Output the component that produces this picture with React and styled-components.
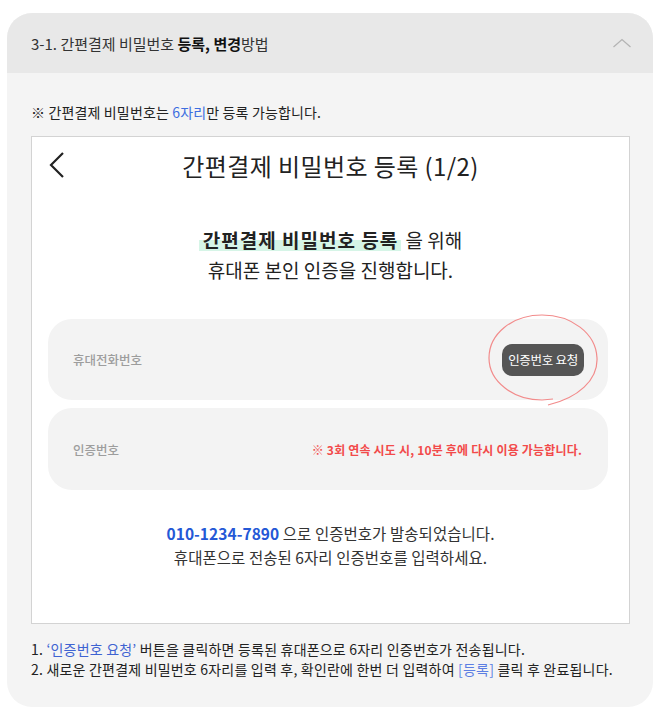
import React from "react";
import styled, { createGlobalStyle } from "styled-components";

const Global = createGlobalStyle`
  html, body { margin: 0; padding: 0; background: #ffffff; }
  body { font-family: "Noto Sans CJK KR", "Noto Sans", sans-serif; color: #222; }
  * { box-sizing: border-box; }
`;

const Card = styled.section`
  margin: 13px 5px 0 7px;
  width: 646px;
  border-radius: 25px;
  overflow: hidden;
  background: #f4f4f4;
`;

const Header = styled.header`
  height: 60px;
  background: #e8e8e8;
  display: flex;
  align-items: center;
  justify-content: space-between;
  padding: 0 21px 0 24px;
`;

const HeaderTitle = styled.h3`
  margin: 0;
  font-size: 15px;
  font-weight: 400;
  color: #333;
  letter-spacing: 0;
  b { font-weight: 700; color: #111; }
`;

const Body = styled.div`
  padding: 29px 23px 28px 24px;
`;

const Note = styled.p`
  margin: 0 0 14px;
  font-size: 14px;
  line-height: 20px;
  color: #222;
  letter-spacing: 0.15px;
`;

const Blue = styled.span`
  color: ${(p) => p.$c || "#3d6ee0"};
  font-weight: ${(p) => (p.$bold ? 700 : "inherit")};
`;

const Shot = styled.div`
  height: 488px;
  border: 1px solid #d3d3d3;
  background: #fff;
  display: flex;
  flex-direction: column;
  position: relative;
`;

const TopBar = styled.div`
  height: 56px;
  display: grid;
  grid-template-columns: 1fr auto 1fr;
  align-items: center;
  padding: 0 16px;
`;

const Back = styled.svg`
  justify-self: start;
  width: 18px;
  height: 28px;
`;

const ShotTitle = styled.h2`
  margin: 0;
  font-size: 24px;
  font-weight: 400;
  color: #222;
  letter-spacing: 0.4px;
`;

const Lead = styled.p`
  margin: 32px 0 0;
  text-align: center;
  font-size: 19px;
  line-height: 30px;
  color: #222;
  letter-spacing: 0;
`;

const Mark = styled.strong`
  font-weight: 700;
  letter-spacing: 1px;
  padding: 0 3px 0 4px;
  background: linear-gradient(
    transparent 52%,
    #d6f5e7 52%,
    #d6f5e7 92%,
    transparent 92%
  );
`;

const Field = styled.div`
  margin: ${(p) => p.$m};
  height: ${(p) => p.$h}px;
  border-radius: 24px;
  background: #f3f3f3;
  display: flex;
  align-items: center;
  justify-content: space-between;
  padding: 0 ${(p) => p.$pr}px 0 25px;
`;

const Label = styled.span`
  font-size: 12.5px;
  font-weight: 500;
  color: #9d9d9d;
  letter-spacing: 0;
`;

const ReqButton = styled.button`
  width: 82px;
  height: 32px;
  border: 0;
  border-radius: 10px;
  background: #555;
  color: #fff;
  font-family: inherit;
  font-size: 12.5px;
  letter-spacing: -0.3px;
  padding: 0;
`;

const Warn = styled.span`
  font-size: 12px;
  font-weight: 700;
  color: #f24a4a;
  letter-spacing: 0.18px;
`;

const Ring = styled.svg`
  position: absolute;
  left: 448px;
  top: 173px;
  width: 125px;
  height: 100px;
  pointer-events: none;
`;

const Sent = styled.p`
  margin: 31px 0 0;
  text-align: center;
  font-size: 15.5px;
  line-height: 24px;
  color: #333;
  letter-spacing: 0.05px;
`;

const Steps = styled.ol`
  margin: 15px 0 0;
  padding: 0;
  list-style: none;
  font-size: 14px;
  line-height: 20px;
  color: #222;
  letter-spacing: 0.2px;
`;

export default function App() {
  return (
    <>
      <Global />
      <Card>
        <Header>
          <HeaderTitle>
            3-1. 간편결제 비밀번호 <b>등록, 변경</b>방법
          </HeaderTitle>
          <svg width="20" height="12" viewBox="0 0 20 12" fill="none">
            <path d="M1.5 10 L10 2.5 L18.5 10" stroke="#b4b4b4" strokeWidth="1.3" />
          </svg>
        </Header>
        <Body>
          <Note>
            ※ 간편결제 비밀번호는 <Blue>6자리</Blue>만 등록 가능합니다.
          </Note>
          <Shot>
            <TopBar>
              <Back viewBox="0 0 18 28" fill="none">
                <path d="M15 2 L3 14 L15 26" stroke="#222" strokeWidth="2.2" />
              </Back>
              <ShotTitle>간편결제 비밀번호 등록 (1/2)</ShotTitle>
              <span />
            </TopBar>
            <Lead>
              <Mark>간편결제 비밀번호 등록</Mark> 을 위해
              <br />
              휴대폰 본인 인증을 진행합니다.
            </Lead>
            <Field $m="34px 21px 0 16px" $h={81} $pr={24}>
              <Label>휴대전화번호</Label>
              <ReqButton>인증번호 요청</ReqButton>
            </Field>
            <Field $m="8px 21px 0 16px" $h={82} $pr={26}>
              <Label>인증번호</Label>
              <Warn>※ 3회 연속 시도 시, 10분 후에 다시 이용 가능합니다.</Warn>
            </Field>
            <Sent>
              <Blue $c="#2458d6" $bold>010-1234-7890</Blue> 으로 인증번호가 발송되었습니다.
              <br />
              휴대폰으로 전송된 6자리 인증번호를 입력하세요.
            </Sent>
            <Ring viewBox="0 0 125 100" fill="none">
              <path
                d="M68 95 C98 88 118 70 117 48 C116 23 91 5 62 5 C32 5 9 24 9 48 C9 72 34 90 62 90 L73 89"
                stroke="#f28b8b"
                strokeWidth="1.2"
              />
            </Ring>
          </Shot>
          <Steps>
            <li>
              1. <Blue $c="#3e63d2">‘인증번호 요청’</Blue> 버튼을 클릭하면 등록된 휴대폰으로 6자리 인증번호가 전송됩니다.
            </li>
            <li>
              2. 새로운 간편결제 비밀번호 6자리를 입력 후, 확인란에 한번 더 입력하여{" "}
              <Blue $c="#5c7ee3">[등록]</Blue> 클릭 후 완료됩니다.
            </li>
          </Steps>
        </Body>
      </Card>
    </>
  );
}
